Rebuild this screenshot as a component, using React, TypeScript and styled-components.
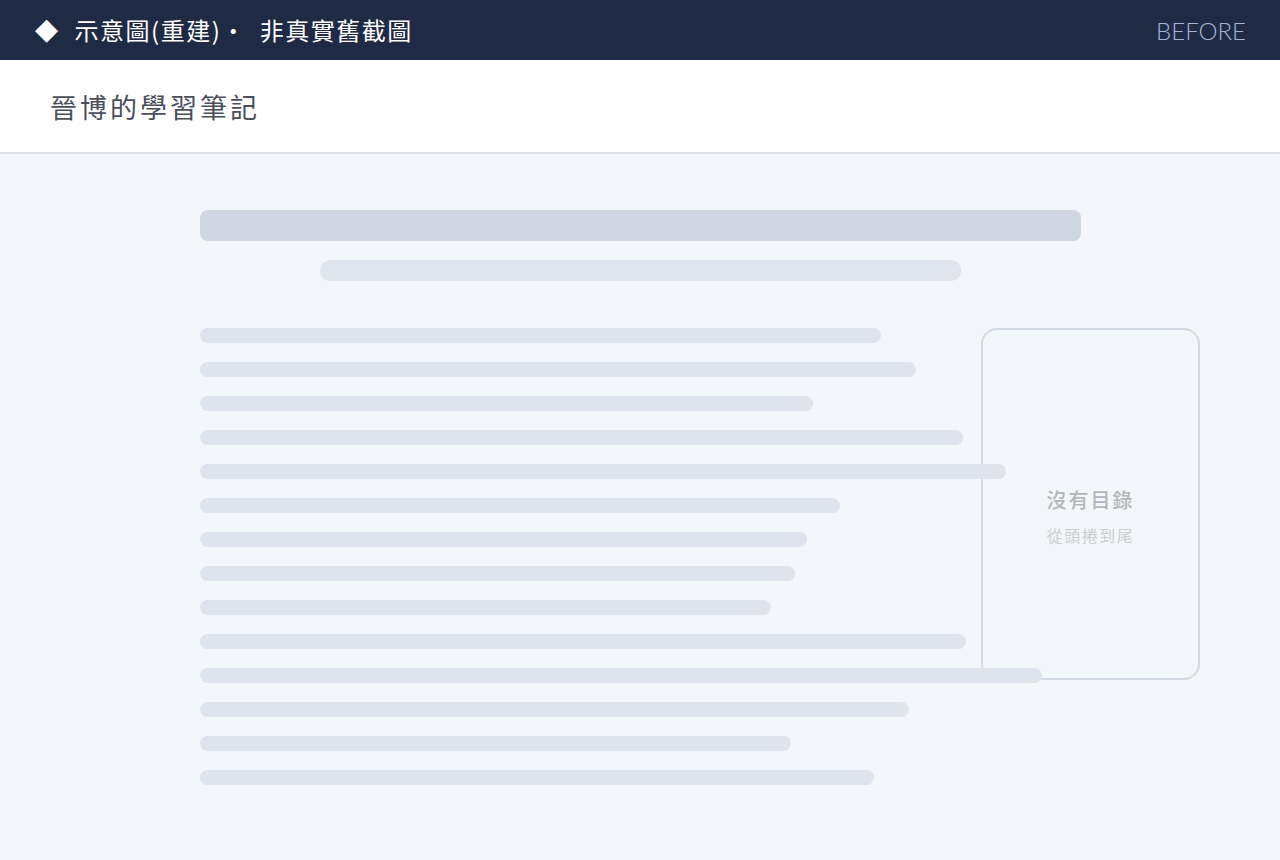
import React from 'react';
import styled, { createGlobalStyle } from 'styled-components';

const GlobalStyle = createGlobalStyle`
  html, body {
    margin: 0;
    padding: 0;
    background: #f3f6fa;
  }
  body {
    font-family: "Noto Sans CJK TC", "Noto Sans", sans-serif;
  }
`;

const Page = styled.div`
  width: 1280px;
  min-height: 860px;
  background: #f3f6fa;
`;

const TopBar = styled.div`
  height: 60px;
  background: #1f2a44;
  display: flex;
  align-items: center;
  justify-content: space-between;
  padding: 0 34px 0 35px;
  box-sizing: border-box;
`;

const Badge = styled.div`
  display: flex;
  align-items: center;
  color: #ffffff;
  font-size: 24px;
  line-height: 1;
  letter-spacing: 1.5px;
`;

const Diamond = styled.span`
  font-size: 30px;
  font-family: "DejaVu Sans", sans-serif;
  margin-right: 15px;
  margin-top: -2px;
`;

const Piece = styled.span<{ $gap?: number }>`
  margin-left: ${(p) => p.$gap ?? 0}px;
`;

const Stage = styled.span`
  font-family: Lato, "Liberation Sans", sans-serif;
  font-weight: 300;
  font-size: 24px;
  color: #a6b2d8;
`;

const TitleBar = styled.div`
  height: 92px;
  background: #ffffff;
  border-bottom: 2px solid #dde1e6;
  display: flex;
  align-items: center;
  padding-left: 50px;
  box-sizing: content-box;
`;

const Title = styled.h1`
  margin: 0;
  font-size: 27px;
  font-weight: 400;
  letter-spacing: 3px;
  color: #4a4f5b;
`;

const Main = styled.main`
  padding-top: 56px;
`;

const Article = styled.div`
  position: relative;
  width: 881px;
  margin: 0 0 0 200px;
  display: flex;
  flex-direction: column;
`;

const Heading = styled.div`
  height: 31px;
  border-radius: 8px;
  background: #cfd6e1;
`;

const Sub = styled.div`
  align-self: center;
  width: 641px;
  height: 21px;
  margin-top: 19px;
  border-radius: 10px;
  background: #e0e5ed;
`;

const Lines = styled.div`
  margin-top: 47px;
  display: flex;
  flex-direction: column;
  gap: 19px;
  position: relative;
  z-index: 1;
`;

const Line = styled.div`
  height: 15px;
  border-radius: 8px;
  background: #dfe4ec;
`;

const Toc = styled.aside`
  position: absolute;
  left: 781px;
  top: 118px;
  width: 219px;
  height: 352px;
  box-sizing: border-box;
  border: 2px solid #d3d9e3;
  border-radius: 16px;
  display: flex;
  flex-direction: column;
  align-items: center;
  justify-content: center;
  gap: 9px;
  padding-top: 24px;
`;

const TocTitle = styled.div`
  font-size: 20px;
  font-weight: 500;
  color: #b1b6be;
  letter-spacing: 2px;
`;

const TocHint = styled.div`
  font-size: 16px;
  color: #c9cdd3;
  letter-spacing: 1.5px;
`;

const widths = [681, 716, 613, 763, 806, 640, 607, 595, 571, 766, 842, 709, 591, 674];

export default function App() {
  return (
    <Page>
      <GlobalStyle />
      <TopBar>
        <Badge>
          <Diamond>◆</Diamond>
          <Piece>示意圖(重建)·</Piece>
          <Piece $gap={13}>非真實舊截圖</Piece>
        </Badge>
        <Stage>BEFORE</Stage>
      </TopBar>
      <TitleBar>
        <Title>晉博的學習筆記</Title>
      </TitleBar>
      <Main>
        <Article>
          <Heading />
          <Sub />
          <Lines>
            {widths.map((w, i) => (
              <Line key={i} style={{ width: w }} />
            ))}
          </Lines>
          <Toc>
            <TocTitle>沒有目錄</TocTitle>
            <TocHint>從頭捲到尾</TocHint>
          </Toc>
        </Article>
      </Main>
    </Page>
  );
}
